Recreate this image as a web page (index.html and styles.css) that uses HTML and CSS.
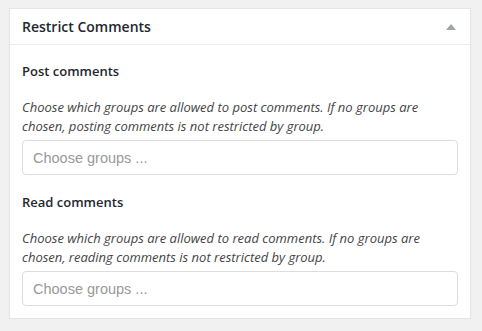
FILE: index.html
```html
<!DOCTYPE html>
<html>
<head>
<meta charset="utf-8">
<link rel="stylesheet" href="styles.css">
</head>
<body>
<div class="postbox">
  <div class="hndle">
    <h2>Restrict Comments</h2>
    <span class="toggle"></span>
  </div>
  <div class="inside">
    <h4>Post comments</h4>
    <p class="desc">Choose which groups are allowed to post comments. If no groups are chosen, posting comments is not restricted by group.</p>
    <div class="select">Choose groups ...</div>
    <h4>Read comments</h4>
    <p class="desc">Choose which groups are allowed to read comments. If no groups are chosen, reading comments is not restricted by group.</p>
    <div class="select">Choose groups ...</div>
  </div>
</div>
</body>
</html>
```
FILE: styles.css
```css
html, body { margin: 0; padding: 0; }
body {
  background: #f1f1f1;
  padding: 8px 11px 0 9px;
  font-family: "Open Sans", sans-serif;
  color: #444;
}
.postbox {
  background: #fff;
  border: 1px solid #e5e5e5;
  box-shadow: 0 1px 1px rgba(0,0,0,.04);
}
.hndle {
  display: flex;
  align-items: center;
  justify-content: space-between;
  height: 35px;
  padding: 0 12px;
  border-bottom: 1px solid #eee;
}
.hndle h2 {
  margin: 0;
  font-size: 14px;
  font-weight: 600;
  color: #23282d;
}
.toggle {
  width: 0; height: 0;
  border-left: 5px solid transparent;
  border-right: 5px solid transparent;
  border-bottom: 6px solid #a0a5aa;
  margin-right: 2px;
}
.inside {
  padding: 16px 12px 12px;
}
.inside h4 {
  margin: 0;
  font-size: 13px;
  font-weight: 600;
  color: #23282d;
  line-height: 20px;
}
.desc {
  margin: 17px 0 4px;
  font-size: 13px;
  font-style: italic;
  line-height: 19px;
  color: #444;
}
.select {
  height: 33px;
  border: 1px solid #ddd;
  border-radius: 4px;
  padding: 0 10px;
  display: flex;
  align-items: center;
  font-family: "Liberation Sans", Arial, sans-serif;
  font-size: 14.5px;
  color: #999;
  margin-bottom: 17px;
}
.select:last-child { margin-bottom: 0; }
```
